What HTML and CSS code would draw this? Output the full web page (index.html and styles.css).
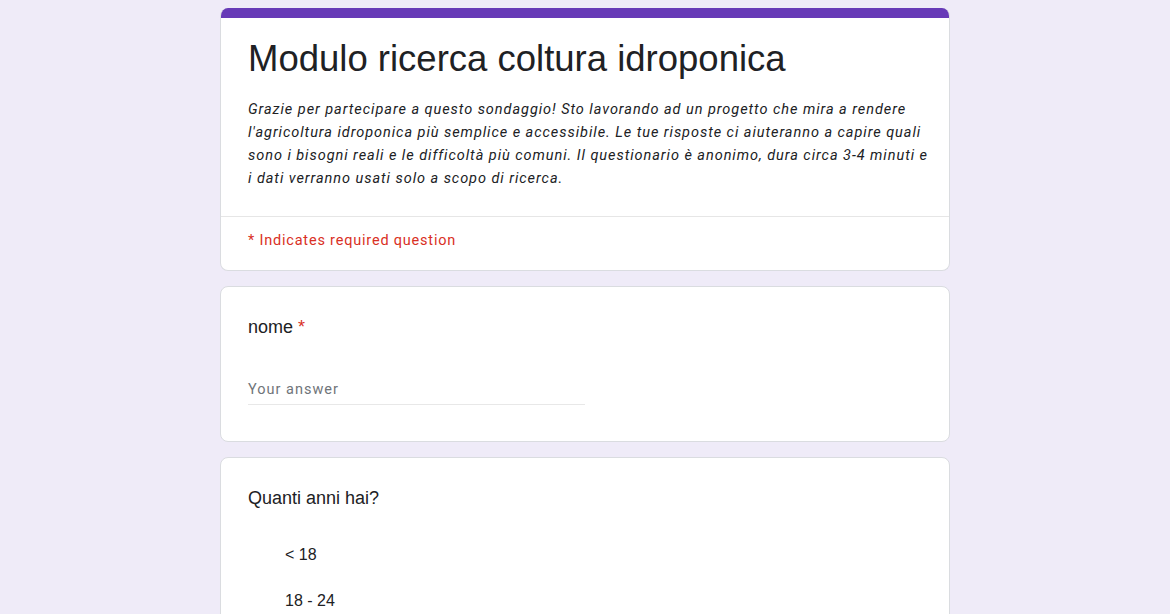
FILE: index.html
```html
<!DOCTYPE html>
<html lang="it">
<head>
<meta charset="utf-8">
<title>Modulo ricerca coltura idroponica</title>
<link rel="stylesheet" href="styles.css">
</head>
<body>
<main class="form">
  <section class="card header-card">
    <div class="accent"></div>
    <div class="header-body">
      <h1 class="title">Modulo ricerca coltura idroponica</h1>
      <p class="desc">Grazie per partecipare a questo sondaggio! Sto lavorando ad un progetto che mira a rendere<br>l'agricoltura idroponica più semplice e accessibile. Le tue risposte ci aiuteranno a capire quali<br>sono i bisogni reali e le difficoltà più comuni. Il questionario è anonimo, dura circa 3-4 minuti e<br>i dati verranno usati solo a scopo di ricerca.</p>
    </div>
    <div class="required-note">* Indicates required question</div>
  </section>

  <section class="card question">
    <div class="q-title">nome <span class="star">*</span></div>
    <div class="answer">Your answer</div>
  </section>

  <section class="card question">
    <div class="q-title">Quanti anni hai?</div>
    <div class="options">
      <div class="option">&lt; 18</div>
      <div class="option">18 - 24</div>
    </div>
  </section>
</main>
</body>
</html>
```
FILE: styles.css
```css
html, body {
  margin: 0;
  padding: 0;
}
body {
  background: #efebf8;
  font-family: "Liberation Sans", Arial, sans-serif;
  color: #202124;
}
.form {
  width: 730px;
  margin: 8px auto 0;
  display: flex;
  flex-direction: column;
  gap: 15px;
}
.card {
  background: #fff;
  border: 1px solid #dadce0;
  border-radius: 8px;
  box-sizing: border-box;
}
.header-card {
  overflow: hidden;
  border-top: none;
}
.accent {
  height: 10px;
  background: #673ab7;
}
.header-body {
  padding: 17px 27px 26px;
  border-bottom: 1px solid #e6e6e6;
}
.title {
  margin: 0;
  font-family: "Liberation Sans", Arial, sans-serif;
  font-weight: 400;
  font-size: 36.5px;
  line-height: 48px;
  color: #202124;
}
.desc {
  margin: 15px 0 0;
  font-family: Roboto, "Liberation Sans", sans-serif;
  font-style: italic;
  font-size: 14.5px;
  line-height: 23px;
  letter-spacing: 0.95px;
  color: #202124;
  white-space: nowrap;
}
.required-note {
  padding: 14px 27px 19px;
  font-family: Roboto, "Liberation Sans", sans-serif;
  font-size: 14.5px;
  line-height: 20px;
  letter-spacing: 0.8px;
  color: #d93025;
}
.question {
  padding: 28px 27px 36px;
}
.q-title {
  font-size: 18px;
  line-height: 24px;
  color: #202124;
}
.star {
  color: #d93025;
}
.answer {
  margin-top: 41px;
  width: 337px;
  padding-bottom: 4px;
  border-bottom: 1px solid #e8e8e8;
  font-family: Roboto, "Liberation Sans", sans-serif;
  font-size: 14.5px;
  line-height: 20px;
  letter-spacing: 1px;
  color: #70757a;
}
.options {
  margin-top: 33px;
  padding-left: 37px;
  display: flex;
  flex-direction: column;
  gap: 22px;
}
.option {
  font-size: 16px;
  line-height: 24px;
  color: #202124;
}
```
